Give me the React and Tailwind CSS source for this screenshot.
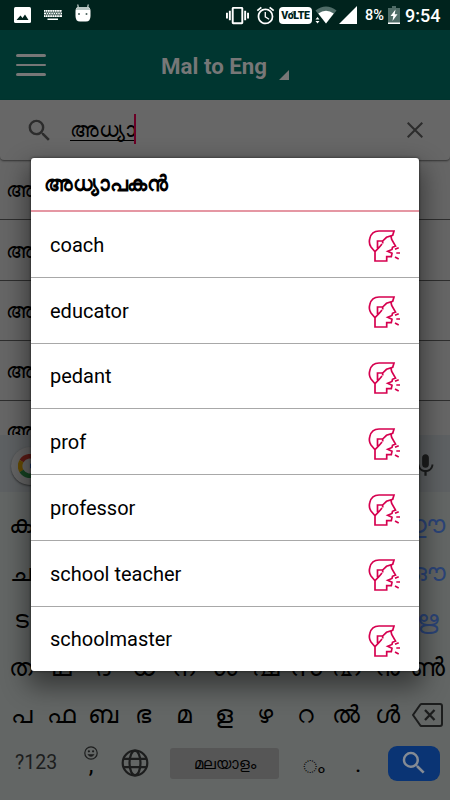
import React from 'react';
import { MdAlarm, MdMic, MdSearch, MdVibration } from 'react-icons/md';

const words = ['coach', 'educator', 'pedant', 'prof', 'professor', 'school teacher', 'schoolmaster'];

const results = ['അ', 'അ', 'അ', 'അ', 'അ'];

const keyRows = [
  ['ക', '', '', '', '', '', '', '', '', '', 'ഈ'],
  ['ച', '', '', '', '', '', '', '', '', '', 'ഔ'],
  ['ട', '', '', '', '', '', '', '', '', '', 'ഋ'],
  ['ത', 'ഥ', 'ദ', 'ധ', 'ന', 'ശ', 'ഷ', 'സ', 'ഹ', 'ൻ', 'ൺ'],
  ['പ', 'ഫ', 'ബ', 'ഭ', 'മ', 'ള', 'ഴ', 'റ', 'ൽ', 'ൾ', 'backspace'],
];

const keyClasses = {
  'ഈ': 'text-[#2b4478] pr-2',
  'ഔ': 'text-[#2b4478]',
  'ഋ': 'text-[#2b4478]',
};

const SpeakIcon = () => (
  <svg className="w-10 h-10 mt-1" viewBox="0 0 40 40" fill="none" stroke="#d6004f" strokeWidth="1.700">
    <path d="M27 10.500L27.700 13.500L31.500 20L28.500 21.300L28 23.500L23.700 25.300L28 27.300L27.300 30.700H22.700V35H11V25.700L7 21C5.300 18.500 5 15.500 5.800 12.500C7 7.500 10.500 5 15 5H30L28.700 9.300L22.500 11.300L18.700 15V17.500" />
    <path d="M18.700 15H13.500V21.300H15.300M18 18L15.300 21.300L11 25.700" />
    <path d="M31 23.300L34.700 21.700M32.300 27H36M31 31L34.700 33" />
  </svg>
);

const StatusBar = () => (
  <div className="h-[30px] shrink-0 bg-[#00231d] text-white flex items-center">
    <svg className="w-[17px] h-4 ml-3.5" viewBox="0 0 17 16">
      <rect width="17" height="16" rx="1.500" fill="#fff" />
      <path d="M2.500 13L6.500 8.500L8.500 11L11 7.500L14.500 13Z" fill="#00231d" />
    </svg>
    <svg className="w-[18px] h-[11px] ml-[13px]" viewBox="0 0 18 11">
      <path d="M0 0H18V7H0Z M3.500 8.500H14V10H3.500Z" fill="#fff" />
      <path d="M0 2.300H18M0 4.700H18" stroke="#00231d" strokeWidth="0.7" />
      <path d="M1 1.200H18M2 3.500H17M1 5.800H17" stroke="#00231d" strokeWidth="1.200" strokeDasharray="0.7 1.600" />
    </svg>
    <svg className="w-4 h-[18px] ml-[13px] mb-1" viewBox="0 0 16 18">
      <path d="M3.500 5L2.800 0.500M12.500 5L13.200 0.500" stroke="#dfe8e6" strokeWidth="1.100" />
      <path d="M0.500 7Q0.500 3 4 3H12Q15.500 3 15.500 7V12Q15.500 17.500 11 17.500H5Q0.500 17.500 0.500 12Z" fill="#fff" />
      <path d="M1 6Q1 3 4 3H12Q15 3 15 6Z" fill="#b9c7c4" />
      <circle cx="4" cy="10" r="1" fill="#4d625e" />
      <circle cx="11.500" cy="10" r="1" fill="#4d625e" />
    </svg>
    <MdVibration className="w-[23px] h-[23px] ml-[135px]" />
    <MdAlarm className="w-[21px] h-[21px] ml-[6px]" />
    <div className="relative w-[33px] h-[17px] ml-[3px] rounded-sm bg-white text-[#00231d] text-[10.500px] font-black leading-[18px] text-center tracking-tight">
      VoLTE
      <svg className="absolute left-[10px] top-[3px] w-2 h-2" viewBox="0 0 8 8" fill="none" stroke="#00231d" strokeWidth="0.9">
        <path d="M1 4Q3 1 7 2M3 5Q4 3 7 4" />
      </svg>
    </div>
    <svg className="w-[22px] h-[18px] ml-[3px]" viewBox="0 0 22 18">
      <path d="M0.500 4.500Q11 -3.500 21.500 4.500L11 17.500Z" fill="#4f6c67" />
      <path d="M3.300 7.500Q11 2 18.700 7.500L11 17.500Z" fill="#fff" />
      <path d="M2.500 11L4.500 13.500H0.500ZM2.500 17.500L4.500 15H0.500Z" fill="#fff" />
    </svg>
    <svg className="w-[18px] h-[18px] ml-[2px]" viewBox="0 0 18 18">
      <path d="M18 0V18H0Z" fill="#fff" />
    </svg>
    <span className="w-5 ml-2 text-[14.500px] font-medium leading-none mt-0.5">8%</span>
    <svg className="w-3 h-[18px] ml-[3px]" viewBox="0 0 12 18">
      <path d="M4 0H8V2H12V18H0V2H4Z" fill="#4f6c67" />
      <path d="M0 16.500H12V18H0Z" fill="#fff" />
      <path d="M7.500 3.500L2.500 10H5.300L4.500 15L9.500 8.300H6.700Z" fill="#fff" />
    </svg>
    <span className="ml-[5px] text-[18px] font-medium leading-none mt-0.5">9:54</span>
  </div>
);

const Header = () => (
  <div className="h-[70px] shrink-0 bg-[#003630] flex items-center pl-4 text-[#777]">
    <div className="w-[30px] flex flex-col gap-[7px]">
      <div className="h-[2.500px] rounded-full bg-[#777]" />
      <div className="h-[2.500px] rounded-full bg-[#777]" />
      <div className="h-[2.500px] rounded-full bg-[#777]" />
    </div>
    <h1 className="ml-[115px] w-[106px] whitespace-nowrap text-[22.300px] font-bold leading-none mt-0.5">Mal to Eng</h1>
    <svg className="w-[10px] h-[10px] ml-3 mt-5" viewBox="0 0 10 10">
      <path d="M10 0V10H0Z" fill="#777" />
    </svg>
  </div>
);

const SearchBar = () => (
  <div className="h-[60px] shrink-0 flex items-center rounded-b bg-[#676767] shadow-[0_1px_2px_rgba(0,0,0,0.5)]">
    <MdSearch className="w-[29px] h-[29px] ml-[25px] text-[#2c2c2c]" />
    <div className="ml-4 -mt-1.5 w-[64px] h-[27px] border-b border-black text-[20.500px] leading-[33px] whitespace-nowrap text-black">
      അധ്യാ
    </div>
    <div className="w-0.5 h-[30px] -mt-0.5 bg-[#6b0026]" />
    <svg className="w-4 h-4 ml-[271px]" viewBox="0 0 16 16" stroke="#2c2c2c" strokeWidth="2">
      <path d="M0.700 0.700L15.300 15.300M15.300 0.700L0.700 15.300" />
    </svg>
  </div>
);

const ResultList = () => (
  <div className="h-[275px] shrink-0 overflow-hidden">
    {results.map((item, i) => (
      <div key={i} className="h-[60.300px] border-b border-[#2e2e2e] flex items-center pl-[6px] pt-0.5 text-[20.500px] text-black">
        {item}
      </div>
    ))}
  </div>
);

const GoogleLogo = () => (
  <div className="w-[38px] h-[38px] rounded-full bg-[#666] shadow-[0_1px_2px_rgba(0,0,0,0.5)] flex items-center justify-center">
    <svg className="w-6 h-6" viewBox="0 0 24 24" fill="none" strokeWidth="4.500">
      <path d="M3.500 7A10 10 0 0 1 19 5" stroke="#5e1b15" />
      <path d="M3.500 17A10 10 0 0 1 3.500 7" stroke="#654b02" />
      <path d="M18.500 19.500A10 10 0 0 1 3.500 17" stroke="#154422" />
      <path d="M12 12H21.500Q21.500 17 18.500 19.500" stroke="#1b3563" />
    </svg>
  </div>
);

const BackspaceKey = () => (
  <svg className="w-8 h-6" viewBox="0 0 32 24" fill="none" stroke="#1c1d1d" strokeWidth="2">
    <path d="M9.500 1H28Q30 1 30 3V21Q30 23 28 23H9.500Q8.500 23 8 22L1 12L8 2Q8.500 1 9.500 1Z" />
    <path d="M13 7L22.500 17M22.500 7L13 17" strokeWidth="2.300" />
  </svg>
);

const GlobeIcon = () => (
  <svg className="w-7 h-7" viewBox="0 0 28 28" fill="none" stroke="#1c1d1d" strokeWidth="2.200">
    <circle cx="14" cy="14" r="12.300" />
    <ellipse cx="14" cy="14" rx="5.500" ry="12.300" />
    <path d="M2.500 9.800H25.500M2.500 18.200H25.500" />
  </svg>
);

const SmileyIcon = () => (
  <svg className="w-[14px] h-[14px]" viewBox="0 0 14 14" fill="none" stroke="#1c1d1d" strokeWidth="1.200">
    <circle cx="7" cy="7" r="6.200" />
    <path d="M3.800 8.500Q7 12.500 10.200 8.500Z" fill="#1c1d1d" strokeWidth="0.5" />
    <circle cx="4.900" cy="5.300" r="0.500" />
    <circle cx="9.100" cy="5.300" r="0.500" />
  </svg>
);

const Keyboard = () => (
  <div className="flex-1 bg-[#636665] text-black flex flex-col">
    <div className="h-[57px] shrink-0 bg-[#5e6163] flex items-center justify-between px-[11px] pt-1">
      <GoogleLogo />
      <MdMic className="w-[27px] h-[27px] text-[#1c1d1d]" />
    </div>
    <div className="h-[246px] shrink-0 pt-[9px] pl-[1px] pr-[2px]">
      {keyRows.map((row, i) => (
        <div key={i} className="h-[47.500px] grid grid-cols-11 place-items-center text-[25px] leading-none">
          {row.map((key, j) =>
            key === 'backspace' ? (
              <BackspaceKey key={j} />
            ) : (
              <span key={j} className={keyClasses[key] || ''}>{key}</span>
            )
          )}
        </div>
      ))}
    </div>
    <div className="h-[50px] flex items-center">
      <span className="w-[42px] ml-[15px] whitespace-nowrap text-[19.500px] text-[#1c1d1d]">?123</span>
      <div className="w-[14px] h-9 ml-[27px] mt-0.5 flex flex-col items-center">
        <SmileyIcon />
        <span className="text-[24px] leading-[18px] -mt-1">,</span>
      </div>
      <div className="ml-[23px]">
        <GlobeIcon />
      </div>
      <div className="w-[109px] h-[31px] ml-[21px] rounded-[3px] bg-[#565656] text-[15px] flex items-center justify-center pt-[3px]">
        മലയാളം
      </div>
      <span className="w-6 ml-6 mt-2 text-[18px] leading-none">◌ം</span>
      <span className="w-2 ml-7 mt-0.5 text-[24px] leading-none">.</span>
      <div className="w-[52px] h-[35px] ml-[25px] rounded-[9px] bg-[#0a3474] flex items-center justify-center">
        <MdSearch className="w-[30px] h-[30px] text-[#858b94]" />
      </div>
    </div>
  </div>
);

const MeaningDialog = () => (
  <div className="absolute left-[31px] top-[158px] w-[388px] h-[513px] rounded-[3px] overflow-hidden bg-white text-black shadow-[0_12px_26px_4px_rgba(0,0,0,0.45),0_0_3px_rgba(0,0,0,0.6)]">
    <h2 className="h-[54px] border-b-2 border-[#e597a3] pl-[13px] flex items-center text-[20.500px] tracking-[-0.2px] font-bold">അധ്യാപകൻ</h2>
    {words.map((word) => (
      <div
        key={word}
        className="h-[65.800px] last:h-[64.200px] border-b-[1.500px] last:border-b-0 border-[#a8a8a8] flex items-center justify-between pl-[19px] pr-[15px] text-[20px]"
      >
        <span className="pt-px">{word}</span>
        <SpeakIcon />
      </div>
    ))}
  </div>
);

export default function App() {
  return (
    <div className="relative w-[450px] h-[800px] overflow-hidden bg-[#666] font-['Roboto',sans-serif] flex flex-col">
      <StatusBar />
      <Header />
      <SearchBar />
      <ResultList />
      <Keyboard />
      <MeaningDialog />
    </div>
  );
}
